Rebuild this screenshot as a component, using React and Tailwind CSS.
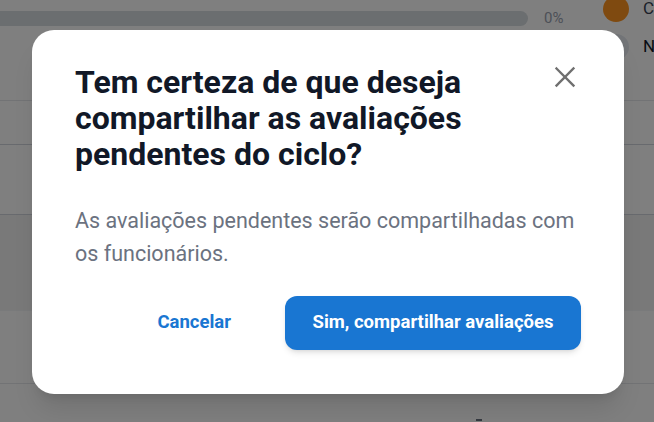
import React from 'react';

const FONT = { fontFamily: 'Roboto, "Noto Sans", Arial, sans-serif' };

function Background() {
  return (
    <div className="w-[654px] h-[422px] overflow-hidden bg-white text-gray-900" style={FONT}>
      <div className="flex h-[101px] items-start border-b border-gray-200">
        <div className="flex flex-1 items-center gap-4 pt-[11px]">
          <div className="h-[15px] w-[528px] rounded-r-full bg-[#d7dce0]" />
          <span className="text-[15px] leading-none text-gray-400">0%</span>
        </div>
        <div className="-mt-[4px] flex w-[51px] flex-col gap-[12px]">
          <div className="flex items-center gap-[14px]">
            <span className="h-[26px] w-[26px] shrink-0 rounded-full bg-[#fe9420]" />
            <span className="text-[17px] text-gray-700">C</span>
          </div>
          <div className="flex items-center gap-[14px]">
            <span className="h-[26px] w-[26px] shrink-0 rounded-full bg-[#e4e8ef]" />
            <span className="text-[17px] text-gray-900">N</span>
          </div>
        </div>
      </div>
      <div className="h-[44px] border-b border-gray-300" />
      <div className="h-[70px] border-b border-gray-300" />
      <div className="h-[31px] bg-[#f3f3f3]" />
      <div className="h-[65px] border-b border-gray-100 bg-[#f3f3f3]" />
      <div className="h-[73px] border-b border-gray-200" />
      <div className="flex justify-end pr-[172px] pt-[35px]">
        <span className="h-[2px] w-[6px] bg-gray-500" />
      </div>
    </div>
  );
}

export default function App() {
  return (
    <div className="relative w-[654px] h-[422px] overflow-hidden" style={FONT}>
      <Background />
      <div className="absolute inset-0 bg-black/50">
        <div className="ml-[32px] mt-[30px] w-[592px] rounded-[22px] bg-white px-[43px] pt-[34px] pb-[44px] shadow-xl">
          <div className="flex items-start justify-between gap-4">
            <h2 className="text-[32px] font-bold leading-9 text-[#111827]">
              Tem certeza de que deseja compartilhar as avaliações pendentes do ciclo?
            </h2>
            <button className="mt-[1px] mr-[4px] shrink-0 text-[#6f6f6f]" aria-label="Fechar">
              <svg width="24" height="24" viewBox="0 0 24 24" fill="none" stroke="currentColor" strokeWidth="2.3" strokeLinecap="square">
                <path d="M3.5 3.5 L20.5 20.5" />
                <path d="M20.5 3.5 L3.5 20.5" />
              </svg>
            </button>
          </div>
          <p className="mt-[32px] text-[21.5px] leading-[33px] text-[#6b7280]">
            As avaliações pendentes serão compartilhadas com os funcionários.
          </p>
          <div className="mt-[26px] flex items-center justify-end gap-[54px]">
            <button className="text-[18.5px] font-bold text-[#1976d2]">Cancelar</button>
            <button className="h-[54px] w-[296px] rounded-xl bg-[#1976d2] text-[18.5px] font-bold text-white shadow-md">
              Sim, compartilhar avaliações
            </button>
          </div>
        </div>
      </div>
    </div>
  );
}
